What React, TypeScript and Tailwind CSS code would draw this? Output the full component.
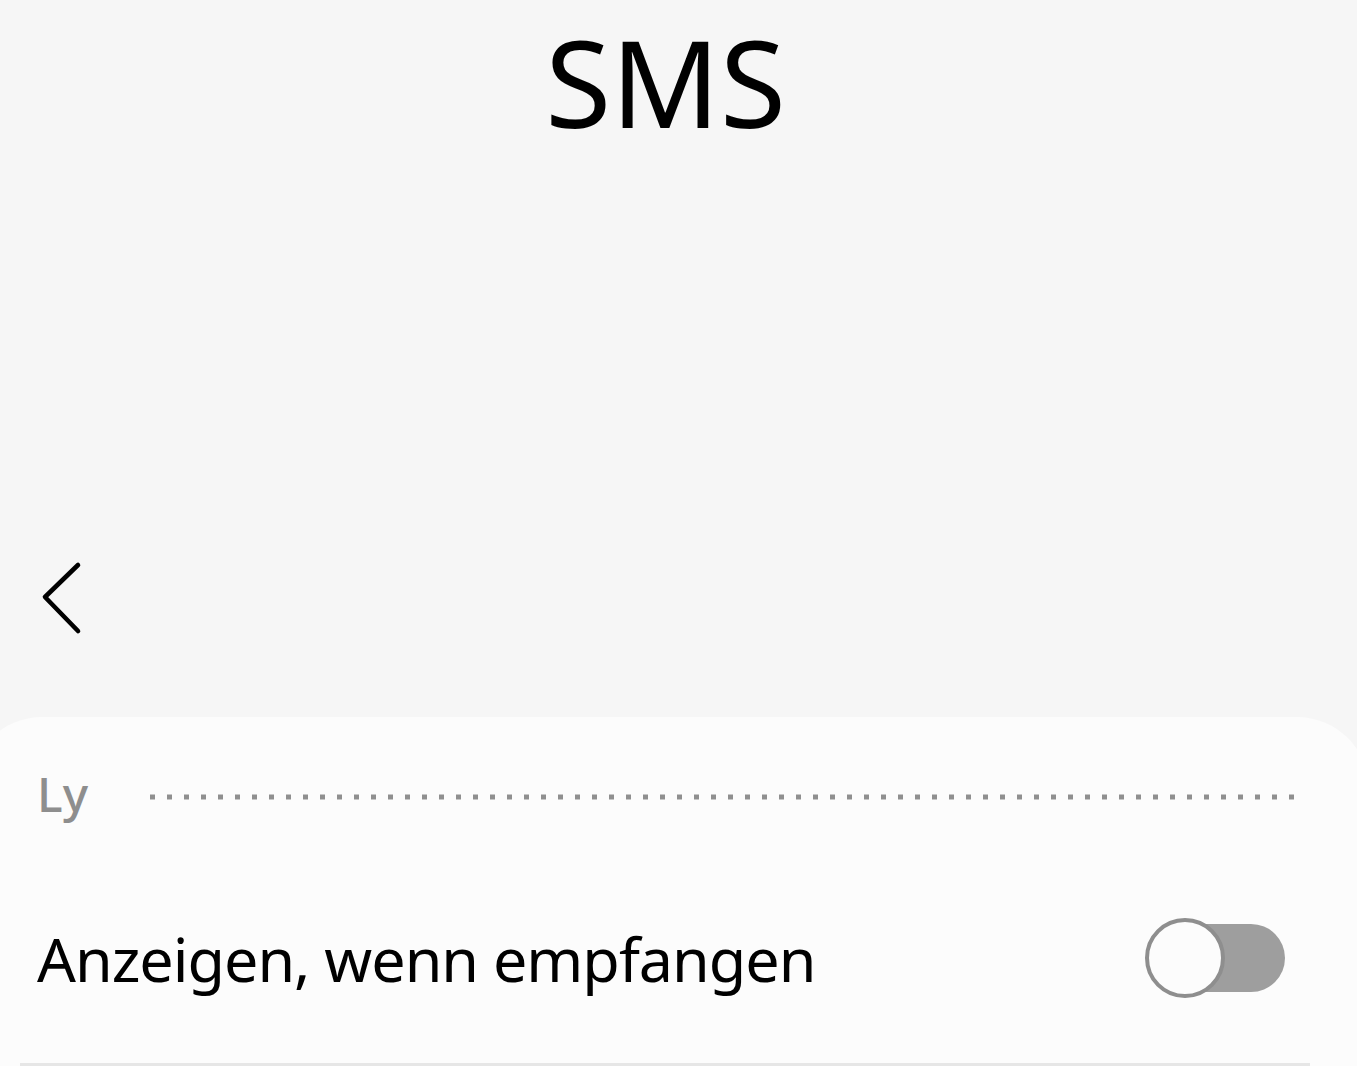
const font = { fontFamily: '"Noto Sans", "Open Sans", sans-serif' };

function DottedRule() {
  return (
    <svg className="flex-1 h-[6px]" preserveAspectRatio="none">
      <line x1="0" y1="3" x2="100%" y2="3" stroke="#8f8f8f" strokeWidth="5" strokeDasharray="5 12" />
    </svg>
  );
}

function BackIcon() {
  return (
    <svg width="48" height="80" viewBox="0 0 48 80" fill="none">
      <polyline points="37,6 4,38 37,72" stroke="#000" strokeWidth="4.6" strokeLinecap="round" strokeLinejoin="round" />
    </svg>
  );
}

function Toggle() {
  return (
    <div className="relative w-[140px] h-[84px] flex items-center">
      <div className="absolute left-[6px] right-0 h-[68px] rounded-full bg-[#9e9e9e]" />
      <div className="relative w-[80px] h-[80px] rounded-full border-[4px] border-[#8e8e8e] bg-[#fcfcfc]" />
    </div>
  );
}

export default function App() {
  return (
    <div style={font} className="h-[1066px] w-[1357px] overflow-hidden bg-[#f6f6f6] flex flex-col">
      {/* Large title */}
      <div className="h-[530px] flex justify-center pt-[10px]">
        <h1 className="text-[120px] leading-[1.2] text-black font-normal mr-[26px]">SMS</h1>
      </div>

      {/* Back */}
      <div className="h-[188px] flex items-start pl-[41px] pt-[30px]">
        <BackIcon />
      </div>

      {/* Card, slightly wider than the screen so its corners curve off-edge */}
      <div className="flex-1 ml-[-30px] mr-[-12px] bg-[#fcfcfc] rounded-t-[72px] flex flex-col">
        <div className="h-[160px] flex items-center pl-[67px] pr-[69px] gap-[62px]">
          <span className="text-[48px] leading-none text-[#8e8e8e] font-medium pb-[6px]">Ly</span>
          <DottedRule />
        </div>
        <div className="h-[186px] flex items-center justify-between pl-[67px] pr-[84px] pb-[24px]">
          <span className="text-[61px] leading-none tracking-[-1px] text-black">Anzeigen, wenn empfangen</span>
          <Toggle />
        </div>
        <div className="ml-[50px] mr-[59px] h-[3px] bg-[#e6e6e6]" />
      </div>
    </div>
  );
}
